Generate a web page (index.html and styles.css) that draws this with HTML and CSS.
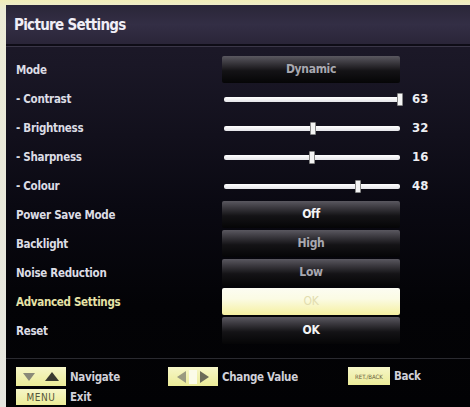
FILE: index.html
```html
<!DOCTYPE html>
<html>
<head>
<meta charset="utf-8">
<link rel="stylesheet" href="styles.css">
</head>
<body>
<div class="screen">
  <div class="title">Picture Settings</div>
  <div class="divider"></div>
  <div class="rows">
    <div class="row"><span class="label">Mode</span><span class="box dim">Dynamic</span></div>
    <div class="row"><span class="label">- Contrast</span><span class="slider"><span class="track"></span><span class="thumb" style="left:100%"></span></span><span class="num">63</span></div>
    <div class="row"><span class="label">- Brightness</span><span class="slider"><span class="track"></span><span class="thumb" style="left:50.8%"></span></span><span class="num">32</span></div>
    <div class="row"><span class="label">- Sharpness</span><span class="slider"><span class="track"></span><span class="thumb" style="left:50%"></span></span><span class="num">16</span></div>
    <div class="row"><span class="label">- Colour</span><span class="slider"><span class="track"></span><span class="thumb" style="left:76%"></span></span><span class="num">48</span></div>
    <div class="row"><span class="label">Power Save Mode</span><span class="box bright">Off</span></div>
    <div class="row"><span class="label">Backlight</span><span class="box dim">High</span></div>
    <div class="row"><span class="label">Noise Reduction</span><span class="box dim">Low</span></div>
    <div class="row sel"><span class="label">Advanced Settings</span><span class="box hl">OK</span></div>
    <div class="row"><span class="label">Reset</span><span class="box bright">OK</span></div>
  </div>
  <div class="fdivider"></div>
  <div class="footer">
    <div class="fcol">
      <div class="fitem"><span class="key k1"><span class="tri down"></span><span class="tri up"></span></span><span class="ftext">Navigate</span></div>
      <div class="fitem"><span class="key k1 small">MENU</span><span class="ftext">Exit</span></div>
    </div>
    <div class="fcol c2">
      <div class="fitem"><span class="key k2"><span class="tri left"></span><span class="bar"></span><span class="tri right"></span></span><span class="ftext">Change Value</span></div>
    </div>
    <div class="fcol c3">
      <div class="fitem"><span class="key k3"><span class="mini">RET./BACK</span></span><span class="ftext">Back</span></div>
    </div>
  </div>
</div>
</body>
</html>
```
FILE: styles.css
```css
html, body {
  margin: 0;
  padding: 0;
}
body {
  width: 470px;
  height: 407px;
  overflow: hidden;
  background: linear-gradient(180deg, #f1edb8 0, #ecebd6 10px, #e6e6e0 100%);
  font-family: "DejaVu Sans Condensed", "DejaVu Sans", sans-serif;
  font-weight: bold;
  color: #e8e8ee;
}
.screen {
  margin: 5px 0 0 6px;
  width: 464px;
  height: 402px;
  background: linear-gradient(180deg, #1e1a2a 0, #1a1726 60px, #0a0912 200px, #030306 300px, #020204 100%);
  overflow: hidden;
}
.title {
  height: 39px;
  padding-left: 8px;
  line-height: 40px;
  font-size: 15px;
  color: #f0eef6;
  background: linear-gradient(180deg, #2a2638 0, #332e45 50%, #2a2538 100%);
  letter-spacing: -0.7px;
}
.divider {
  height: 2px;
  background: #0e0c16;
  border-bottom: 1px solid #3a3648;
}
.rows {
  padding-top: 8px;
}
.row {
  display: flex;
  align-items: center;
  height: 29px;
}
.label {
  width: 216px;
  padding-left: 10px;
  box-sizing: border-box;
  font-size: 11.5px;
  letter-spacing: -0.3px;
  color: #dcdce4;
}
.row.sel .label {
  color: #e6e2a6;
}
.box {
  width: 178px;
  height: 27px;
  line-height: 27px;
  text-align: center;
  font-size: 12px;
  letter-spacing: -0.3px;
  background: linear-gradient(180deg, #5a5860 0, #3a383e 25%, #141316 55%, #050506 100%);
  border-radius: 2px;
}
.box.dim {
  color: #a8a8b0;
}
.box.bright {
  color: #f4f4f6;
}
.box.hl {
  background: linear-gradient(180deg, #fcfcf2 0, #fbfbe4 40%, #f5f0a0 100%);
  color: #e2ddb0;
  font-weight: normal;
}
.slider {
  position: relative;
  width: 176px;
  height: 6px;
  margin-left: 2px;
}
.track {
  display: block;
  width: 100%;
  height: 5px;
  margin-top: 1px;
  background: linear-gradient(180deg, #ffffff, #e4e4e8);
  border-radius: 2px;
}
.thumb {
  position: absolute;
  top: -3px;
  width: 4px;
  height: 11px;
  margin-left: -3px;
  background: #f4f4f4;
  border: 1px solid #888;
  border-radius: 1px;
}
.num {
  margin-left: 12px;
  font-size: 13px;
  color: #eeeef2;
}
.fdivider {
  margin-top: 13px;
  height: 1px;
  background: #2a2a30;
}
.footer {
  display: flex;
  padding: 8px 0 0 10px;
}
.fcol {
  display: flex;
  flex-direction: column;
  gap: 3px;
}
.fcol.c2 {
  margin-left: 48px;
}
.fcol.c3 {
  margin-left: 50px;
}
.fitem {
  display: flex;
  align-items: center;
  gap: 4px;
}
.ftext {
  font-size: 11.5px;
  color: #d0d0d8;
  letter-spacing: -0.3px;
}
.key {
  display: flex;
  align-items: center;
  justify-content: center;
  box-sizing: border-box;
  background: linear-gradient(180deg, #f6f6c8, #ecec98);
  color: #6a6a50;
}
.key.k1 {
  width: 50px;
  height: 19px;
  gap: 10px;
}
.key.k1.small {
  height: 16px;
  font-size: 10px;
  font-weight: normal;
  letter-spacing: 0.5px;
  color: #55553a;
}
.key.k2 {
  width: 50px;
  height: 19px;
  gap: 3px;
}
.key.k3 {
  width: 42px;
  height: 18px;
}
.mini {
  font-size: 6px;
  font-weight: normal;
  color: #6a6040;
}
.tri {
  width: 0;
  height: 0;
  border-style: solid;
}
.tri.down {
  border-width: 8px 6px 0 6px;
  border-color: #8a8a78 transparent transparent transparent;
}
.tri.up {
  border-width: 0 7px 9px 7px;
  border-color: transparent transparent #3a3a30 transparent;
}
.tri.left {
  border-width: 6px 9px 6px 0;
  border-color: transparent #9a9a80 transparent transparent;
}
.tri.right {
  border-width: 6px 0 6px 9px;
  border-color: transparent transparent transparent #6a6a58;
}
.bar {
  width: 8px;
  height: 14px;
  background: #fbfbe8;
}
```
